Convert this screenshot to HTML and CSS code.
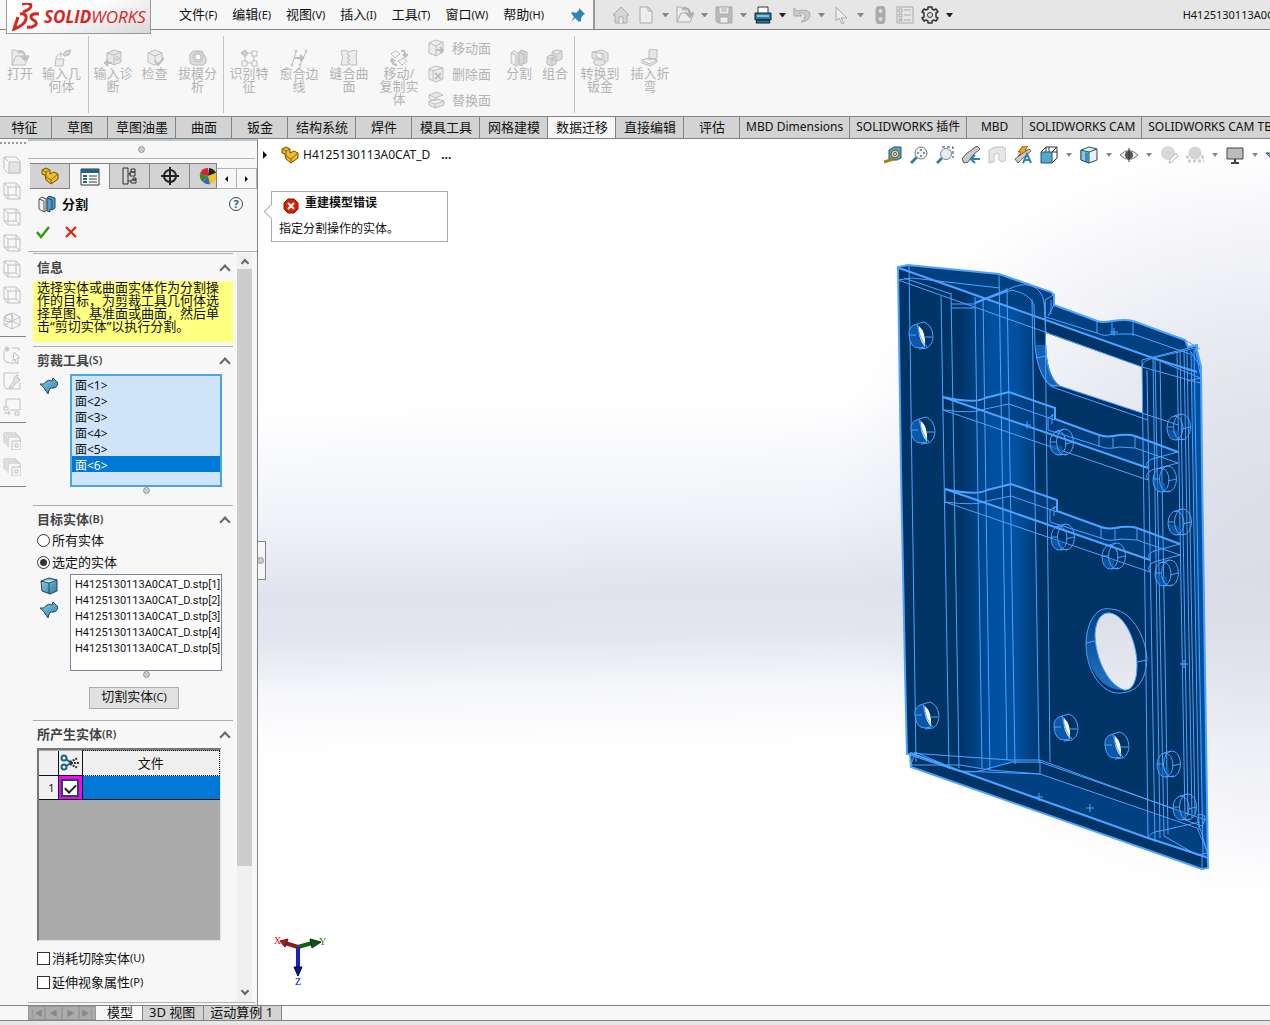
FILE: index.html
```
<!DOCTYPE html>
<html lang="zh-CN">
<head>
<meta charset="UTF-8">
<meta name="viewport" content="width=device-width, initial-scale=1.0">
<title>SOLIDWORKS</title>
<link rel="stylesheet" href="styles.css">
</head>
<body>

<!-- icon sprite -->
<svg class="sprite" aria-hidden="true">
    <linearGradient id="blueFace" x1="0" y1="0" x2="1" y2="1"><stop offset="0" stop-color="#8fd0e8"/><stop offset="1" stop-color="#2f7ca0"/></linearGradient>
    <symbol id="i-open" viewBox="0 0 18 18"><path fill="#ececec" d="M1 16V1h4l2 3h4M1 16l4-9h13l-4 9z"/><path stroke-width="2" d="M7 2q7-1 7 7M10 7l4 4 3-4"/></symbol>
    <symbol id="i-import" viewBox="0 0 18 18"><path fill="#ececec" d="M2 17l1-7h8l-1 7z"/><path d="M3 10q0-5 6-5l-2-2M9 5l-2 3"/><path fill="#d4d4d4" d="M10 5l3-3 5-1-2 5-5 1z"/></symbol>
    <symbol id="i-diag" viewBox="0 0 18 18"><path fill="#e6e6e6" d="M3 4l7-3 7 2v10l-7 3-7-4z"/><path d="M10 16V6M10 6l7-3M3 4l7 2M12 8h3v3h-3z"/><path stroke-width="2" d="M8 14H1m3-3l-3 3 3 3"/></symbol>
    <symbol id="i-check" viewBox="0 0 18 18"><path fill="#ececec" d="M8 16l-6-3V4l7-3 7 3v8l-7 4z"/><path d="M2 4l7 3 7-3M9 7v6"/><path stroke-width="2" d="M9 12l3 4 6-7"/></symbol>
    <symbol id="i-draft" viewBox="0 0 18 18"><path fill="#ddd" d="M1 14V5l3-3h9l4 7v5l-3 2H4z"/><circle cx="9" cy="8" r="5"/><circle cx="9" cy="8" r="3" fill="#fff"/></symbol>
    <symbol id="i-recog" viewBox="0 0 18 18"><path fill="#ccc" d="M1 4l4-3 3 3-3 4z"/><path d="M12 2h5v5h-5zM2 12h5v5H2zM12 12h5v5h-5zM8 4h4M5 8v4M14 7v5M7 14h5"/></symbol>
    <symbol id="i-heal" viewBox="0 0 18 18"><path d="M2 16L6 3M10 16l6-13"/><path stroke-width="2" d="M5 9h8m-3-3l3 3-3 3"/><circle cx="6" cy="2" r="1"/><circle cx="2" cy="16" r="1"/><circle cx="16" cy="2" r="1"/><circle cx="10" cy="16" r="1"/></symbol>
    <symbol id="i-knit" viewBox="0 0 18 18"><path fill="#ececec" d="M1 2q4-2 8 1 4-3 8-1-2 5 0 14h-7l-1-2-1 2H1Q4 8 1 2z"/><path d="M9 3L7 5l3 2-3 2 3 2-3 2 2 1"/></symbol>
    <symbol id="i-move" viewBox="0 0 18 18"><path d="M1 5l5-3 4 3-5 4zM8 12l5-3 4 3-5 4z"/><path stroke-width="2" d="M11 2q5-1 4 5m-2-2l2 3 3-3M7 16q-5 0-5-5m-1 2l1-3 3 2"/></symbol>
    <symbol id="i-face" viewBox="0 0 18 18"><path fill="#ececec" d="M2 4l6-3 8 2v10l-7 4-7-3z"/><path d="M2 4l7 3 7-4M9 7v10"/><path stroke-width="2" d="M9 11h6m-2-3l3 3-3 3"/></symbol>
    <symbol id="i-delface" viewBox="0 0 18 18"><path fill="#ececec" d="M2 4l6-3 8 2v11l-7 3-7-3z"/><path d="M2 4l4 2 10-3M6 6v9"/><path stroke-width="2" d="M8 8l6 6M14 8l-6 6"/></symbol>
    <symbol id="i-repface" viewBox="0 0 18 18"><path fill="#e6e6e6" d="M2 4l8-3 6 3-8 3zM2 10l8-2 7 2-9 3zM2 10v4l6 3 9-3v-4"/><path d="M2 4v3l6 3 1-3M8 13v4"/></symbol>
    <symbol id="i-split" viewBox="0 0 18 18"><path fill="#eee" d="M1 4l3-2 4 2v12l-2 1-5-3zM1 4l5 2v11"/><path fill="#d6d6d6" d="M9 3l2-2 6 2v10l-3 2-2-1v3l-3-1zM9 3l5 2v10"/></symbol>
    <symbol id="i-splitblue" viewBox="0 0 18 18"><path fill="#eee" stroke="#555" d="M1 4l3-2 4 2v12l-2 1-5-3zM1 4l5 2v11"/><path fill="#4b9bc2" stroke="#1d4b60" d="M9 3l2-2 6 2v10l-3 2-2-1v3l-3-1zM9 3l5 2v10"/></symbol>
    <symbol id="i-combine" viewBox="0 0 18 18"><path fill="#ddd" d="M6 3l4-2 6 1v8l-5 2-5-2zM1 8l3-2 6 1v8l-4 2-5-2zM1 8l5 2 4-3M6 10v7M6 3l5 2 5-3"/></symbol>
    <symbol id="i-sheet" viewBox="0 0 18 18"><path fill="#e6e6e6" d="M1 3l10-2 6 3v8l-4 1V5L1 3v6l5 2h7M3 11v4l6 2 5-2v-2"/><path d="M5 4v5l6 1V5"/></symbol>
    <symbol id="i-bend" viewBox="0 0 18 18"><path fill="#e6e6e6" d="M8 1l8-1v9l-8 2zM1 11l7-2 8 2-8 4zM1 11v3l8 3 7-4v-2"/></symbol>
    <symbol id="i-home" viewBox="0 0 18 18"><path fill="#d6d6d6" d="M1 9l8-8 8 8h-2v8H3V9z"/><path fill="#eee" d="M7 17v-6h4v6"/></symbol>
    <symbol id="i-new" viewBox="0 0 18 18"><path fill="#eee" d="M3 1h8l4 4v12H3zM11 1v4h4"/></symbol>
    <symbol id="i-save" viewBox="0 0 18 18"><path fill="#bbb" d="M1 1h16v16H3l-2-2z"/><path fill="#eee" d="M4 1h10v7H4zM5 11h8v6H5z"/><path d="M6 3h6M6 5h6"/></symbol>
    <symbol id="i-print" viewBox="0 0 18 18"><path fill="#fff" stroke="#333" d="M4 1h10v7H4z"/><path fill="#2a7fa5" stroke="#123" d="M1 7h16v7H1zM3 14h12l1 3H2z"/><path stroke="#fff" d="M3 10h12"/></symbol>
    <symbol id="i-undo" viewBox="0 0 18 18"><path fill="#ccc" d="M1 2v8h8L6 7q6-1 6 3 0 4-4 6 9-1 9-7 0-7-13-4z"/></symbol>
    <symbol id="i-cursor" viewBox="0 0 18 18"><path fill="#eee" d="M4 1l11 11H9l3 5-2 1-3-6-3 3z"/></symbol>
    <symbol id="i-light" viewBox="0 0 18 18"><rect x="5" y="0" width="9" height="18" rx="4" fill="#aaa"/><circle cx="9.500" cy="5" r="2" fill="#ddd" stroke="none"/><circle cx="9.500" cy="13" r="2" fill="#ddd" stroke="none"/></symbol>
    <symbol id="i-list" viewBox="0 0 18 18"><path d="M1 1h16v16H1zM3 3h3v3H3zM3 8h3v3H3zM3 13h3v2H3zM8 4h7M8 9h7M8 14h7"/></symbol>
    <symbol id="i-gear" viewBox="0 0 18 18"><path stroke="#333" stroke-linejoin="round" stroke-width="1.500" d="M7 1h4v2l2 1 2-1 2 3-2 1v4l2 1-2 3-2-1-2 1v2H7v-2l-2-1-2 1-2-3 2-1V7L1 6l2-3 2 1 2-1z"/><circle cx="9" cy="9" r="2.500" stroke="#333"/></symbol>
    <symbol id="i-pin" viewBox="0 0 18 18"><path fill="#2a86b5" stroke="none" d="M10 2l6 6-2 1-2 3v3l-2 1-4-4-4 4 3-5-3-4 2-1 3 1 3-3z"/></symbol>

    <symbol id="i-part" viewBox="0 0 18 18"><path fill="#f0bd2b" stroke="#6b4e00" d="M1 3l4-2 4 2v4l4-2 4 2v5l-7 5-5-4-1-5-3-1z"/><path stroke="#8a6700" d="M1 3l4 2 4-2M5 5v5l5 3 7-6M10 13v4"/></symbol>
    <symbol id="i-props" viewBox="0 0 20 18"><path fill="#fff" stroke="#333" d="M1 1h18v16H1z"/><path fill="#1f638a" stroke="none" d="M1 1h18v4H1zM3 7h4v2H3zM3 10h4v2H3zM3 13h4v2H3z"/><path stroke="#333" d="M9 8h8M9 11h8M9 14h8"/></symbol>
    <symbol id="i-config" viewBox="0 0 18 18"><path stroke="#333" d="M2 1h5v16H2zM7 7h3M7 14h3M10 2h4v3h-4zM9 5h5v4H9zM12 11h3v2h-3zM10 13h5v3h-5z"/></symbol>
    <symbol id="i-target" viewBox="0 0 18 18"><g stroke="#222" stroke-width="2"><circle cx="9" cy="9" r="6"/><path d="M9 0v18M0 9h18"/></g></symbol>
    <symbol id="i-ball" viewBox="0 0 18 18"><path fill="#d6202a" stroke="none" d="M9 9V1a8 8 0 0 0-8 6z"/><path fill="#222" stroke="none" d="M9 9L10 1a8 8 0 0 1 7 5z"/><path fill="#2c8f2c" stroke="none" d="M9 9L1 7a8 8 0 0 0 3 8z"/><path fill="#f2c61d" stroke="none" d="M9 9l8-3a8 8 0 0 1-6 11z"/><path fill="#2f64c8" stroke="none" d="M9 9l2 8a8 8 0 0 1-7-2z"/></symbol>
    <symbol id="i-surface" viewBox="0 0 18 18"><path fill="url(#blueFace)" stroke="#1d4b60" d="M0 7Q4 8 6 5 8 2 12 4l1-3 5 5q-1 5-5 5-4-1-5 6L6 14Q4 10 0 7z"/></symbol>
    <symbol id="i-body" viewBox="0 0 18 18"><path fill="url(#blueFace)" stroke="#1d4b60" d="M1 4l8-3 8 2v11l-7 3-8-3zM1 4l8 2 8-3M9 6v11"/></symbol>
    <symbol id="i-cut" viewBox="0 0 20 18"><g stroke="#1f638a" stroke-width="2"><circle cx="4" cy="4" r="2.500"/><circle cx="4" cy="13" r="2.500"/><path d="M6 5l5 4-5 3"/></g><path stroke="#333" stroke-width="2" stroke-dasharray="2 1" d="M10 8l8-4M10 10l8 4M11 9h8"/></symbol>

    <symbol id="i-measure" viewBox="0 0 18 18"><path fill="#5aa5cc" stroke="#1f5673" d="M5 4l5-3h7v11l-4 2H5z"/><circle cx="11" cy="8" r="4" fill="#f3d36b" stroke="#555"/><circle cx="11" cy="8" r="1.500" fill="#fff" stroke="#555"/><path stroke="#a68113" stroke-width="3" d="M0 16l9-3"/></symbol>
    <symbol id="i-zoomfit" viewBox="0 0 18 18"><path stroke="#3c7fa3" stroke-width="3" d="M1 17l6-6"/><circle cx="11" cy="7" r="6" fill="#eef3f6" stroke="#777"/><path stroke="#333" d="M11 3v2M11 9v2M7 7h2M13 7h2"/></symbol>
    <symbol id="i-zoomarea" viewBox="0 0 18 18"><path stroke="#333" stroke-dasharray="3 2" d="M6 1h11v11"/><path stroke="#3c7fa3" stroke-width="3" d="M1 17l5-5"/><circle cx="10" cy="8" r="5.500" fill="#e3edf3" stroke="#888"/></symbol>
    <symbol id="i-prev" viewBox="0 0 18 18"><path fill="#ccc" stroke="#555" d="M0 13l4-5L15 0l3 3-7 6-5 7-4 1z"/><path stroke="#2f83aa" stroke-width="2" d="M18 13H9m4-4l-4 4 4 4"/></symbol>
    <symbol id="i-section" viewBox="0 0 18 18"><path fill="#e6e6e6" stroke="#c0c0c0" d="M1 4l6-3h8l3 2v11l-4 2-3-2V8q-3-2-5 1v7l-5 1z"/></symbol>
    <symbol id="i-dyn" viewBox="0 0 18 18"><path fill="#f0a32b" stroke="#a05c00" d="M9 0h5l-3 4h3L4 11l3-5H4z"/><path fill="#ccc" stroke="#666" d="M1 13l4-3L15 3l2 2-9 8-4 4z"/><path stroke="#2f83aa" stroke-width="2" d="M9 17l4-9 4 9M11 14h5"/></symbol>
    <symbol id="i-orient" viewBox="0 0 18 18"><path stroke="#333" d="M1 6l5-5h11v11l-5 5M6 1v5M12 6l5-5M12 6h5M9 1v5"/><path fill="#59a7cb" stroke="#1f5673" d="M1 6h11v11H1z"/></symbol>
    <symbol id="i-style" viewBox="0 0 18 18"><path fill="#e6f0f4" stroke="#444" d="M1 4l8-3 8 2v11l-8 3-8-3z"/><path fill="#8cc8e0" stroke="#1f5673" d="M1 4l8 2v11l-8-3zM9 6l8-3"/><path fill="#3d8fb8" stroke="none" d="M5 6l4 1v9l-4-1z"/></symbol>
    <symbol id="i-eye" viewBox="0 0 18 18"><path fill="#eee" stroke="#777" d="M0 9q9-9 18 0-9 9-18 0z"/><circle cx="9" cy="9" r="4" fill="#555" stroke="none"/><path stroke="#333" d="M9 2v14"/></symbol>
    <symbol id="i-appear" viewBox="0 0 18 18"><circle cx="8" cy="7" r="7" fill="#d8d8d8" stroke="none"/><path fill="#f4f4f4" stroke="#bbb" d="M9 17l1-4 6-6 2 3-6 6z"/></symbol>
    <symbol id="i-scene" viewBox="0 0 18 18"><path stroke="#ccc" stroke-width="3" stroke-dasharray="3 2" d="M0 11h18M2 15h16"/><circle cx="9" cy="7" r="6.500" fill="#d4d4d4" stroke="none"/></symbol>
    <symbol id="i-screen" viewBox="0 0 18 18"><path fill="#bcbcbc" stroke="#444" d="M1 2h16v11H1z"/><path stroke="#444" stroke-width="2" d="M9 13v3M5 17h8"/></symbol>
    <symbol id="i-cube" viewBox="0 0 18 18"><path d="M1 1h12l4 4v12H5l-4-4zM1 1l4 4h12M5 5v12M1 13h12V1M13 13l4 4"/></symbol>
    <symbol id="i-cubefront" viewBox="0 0 18 18"><path d="M1 1h12l4 4v12H5l-4-4zM1 1l4 4"/><path fill="#e4e4e4" d="M6 6h11v11H6z"/></symbol>
    <symbol id="i-cubeiso" viewBox="0 0 18 18"><path d="M9 1l8 4v8l-8 4-8-4V5zM9 1v16M1 5l16 8M17 5L1 13"/><circle cx="6" cy="6" r="4"/></symbol>
    <symbol id="i-sketch" viewBox="0 0 18 18"><path d="M1 5v8q1 4 6 4h9M4 0v6M1 3h6M2 1l4 4M6 1L2 5M9 2h7v3M11 6l6 6h-3l1 4-2 1-1-4-2 2z"/></symbol>
    <symbol id="i-wrench" viewBox="0 0 18 18"><path d="M16 1H1v11q0 5 5 5h11v-6"/><path d="M6 15l5-6q-1-5 4-6l-1 3 3 1q0 3-4 4l-4 5q-3 1-3-1z" fill="#e4e4e4"/></symbol>
    <symbol id="i-box" viewBox="0 0 18 18"><path d="M3 9V1h14v11H7M1 9h4v3H1zM1 15h6m-2-2l2 2-2 2M12 14h4v3h-4z"/></symbol>
    <symbol id="i-stack" viewBox="0 0 18 18"><path d="M1 11V1h12v2M3 13V3h12v2M5 15V5h12v4M9 9h9v9H9zM12 12h3v3h-3z"/></symbol>

    <!-- drilled hole, plain and see-through -->
    <symbol id="hole" viewBox="0 0 30 30"><path fill="#1262b5" fill-opacity=".7" stroke="none" d="M3 16l12 2q1 5-1 9-9 1-11-11z"/><ellipse cx="11" cy="15" rx="8" ry="12"/><path d="M10 3l7-2M12 27l8-1M3 14h6M18 16l8-2"/><ellipse cx="18" cy="14" rx="8.500" ry="13"/></symbol>
    <symbol id="holeOpen" viewBox="0 0 30 30"><path fill="#0d57a8" d="M11 3q-9 2-8 11 1 13 10 13l6-1Q12 14 11 3z"/><path fill="#fff" stroke="none" d="M13 5q7 6 6 20-7-6-6-20z"/><path d="M11 3l7-2q8 3 9 14 0 8-6 12l-8 1M12 4q1 14 9 22M3 14h7M19 16h7"/></symbol>
</svg>

<header class="menubar">
    <nav class="menus">
        <div class="logo">
            <svg viewBox="0 0 28 28" aria-hidden="true"><path d="M10 1q9-2 9 2 0 3-8 6M8 11q7-1 6 5-1 6-12 10L6 14M27 11q-8-1-8 3 0 2 4 4 3 3-1 5-3 2-7 1"/></svg>
            <span><b>SOLID</b>WORKS</span>
        </div>
        <a href="#file">文件<small>(F)</small></a>
        <a href="#edit">编辑<small>(E)</small></a>
        <a href="#view">视图<small>(V)</small></a>
        <a href="#insert">插入<small>(I)</small></a>
        <a href="#tools">工具<small>(T)</small></a>
        <a href="#window">窗口<small>(W)</small></a>
        <a href="#help">帮助<small>(H)</small></a>
        <button class="icon pin" aria-label="pin"><svg><use href="#i-pin"/></svg></button>
    </nav>
    <div class="quick">
        <button class="icon"><svg><use href="#i-home"/></svg></button>
        <button class="icon"><svg><use href="#i-new"/></svg></button><i class="caret"></i>
        <button class="icon"><svg><use href="#i-open"/></svg></button><i class="caret"></i>
        <button class="icon"><svg><use href="#i-save"/></svg></button><i class="caret"></i>
        <button class="icon"><svg><use href="#i-print"/></svg></button><i class="caret dark"></i>
        <button class="icon"><svg><use href="#i-undo"/></svg></button><i class="caret"></i>
        <button class="icon"><svg><use href="#i-cursor"/></svg></button><i class="caret"></i>
        <button class="icon"><svg><use href="#i-light"/></svg></button>
        <button class="icon"><svg><use href="#i-list"/></svg></button>
        <button class="icon"><svg><use href="#i-gear"/></svg></button><i class="caret dark"></i>
        <span class="doc-title">H4125130113A0C</span>
    </div>
</header>

<section class="ribbon">
    <div class="group">
        <button class="cmd"><svg><use href="#i-open"/></svg>打开</button>
        <button class="cmd"><svg><use href="#i-import"/></svg>输入几<br>何体</button>
    </div>
    <div class="group">
        <button class="cmd"><svg><use href="#i-diag"/></svg>输入诊<br>断</button>
        <button class="cmd"><svg><use href="#i-check"/></svg>检查</button>
        <button class="cmd"><svg><use href="#i-draft"/></svg>拔模分<br>析</button>
    </div>
    <div class="group wide">
        <button class="cmd"><svg><use href="#i-recog"/></svg>识别特<br>征</button>
        <button class="cmd"><svg><use href="#i-heal"/></svg>愈合边<br>线</button>
        <button class="cmd"><svg><use href="#i-knit"/></svg>缝合曲<br>面</button>
        <button class="cmd"><svg><use href="#i-move"/></svg>移动/<br>复制实<br>体</button>
        <div class="stack">
            <button><svg><use href="#i-face"/></svg>移动面</button>
            <button><svg><use href="#i-delface"/></svg>删除面</button>
            <button><svg><use href="#i-repface"/></svg>替换面</button>
        </div>
        <button class="cmd narrow"><svg><use href="#i-split"/></svg>分割</button>
        <button class="cmd narrow"><svg><use href="#i-combine"/></svg>组合</button>
    </div>
    <div class="group wide">
        <button class="cmd"><svg><use href="#i-sheet"/></svg>转换到<br>钣金</button>
        <button class="cmd"><svg><use href="#i-bend"/></svg>插入折<br>弯</button>
    </div>
</section>

<nav class="tabs">
    <button class="first">特征</button>
    <button>草图</button>
    <button>草图油墨</button>
    <button>曲面</button>
    <button>钣金</button>
    <button>结构系统</button>
    <button>焊件</button>
    <button>模具工具</button>
    <button>网格建模</button>
    <button class="active">数据迁移</button>
    <button>直接编辑</button>
    <button>评估</button>
    <button class="latin">MBD Dimensions</button>
    <button class="latin">SOLIDWORKS 插件</button>
    <button class="latin">MBD</button>
    <button class="latin">SOLIDWORKS CAM</button>
    <button class="latin">SOLIDWORKS CAM TBM</button>
</nav>

<main>
    <aside class="sidebar">
        <div class="tools">
            <button class="icon"><svg><use href="#i-cubefront"/></svg></button>
            <button class="icon"><svg><use href="#i-cube"/></svg></button>
            <button class="icon"><svg><use href="#i-cube"/></svg></button>
            <button class="icon"><svg><use href="#i-cube"/></svg></button>
            <button class="icon"><svg><use href="#i-cube"/></svg></button>
            <button class="icon"><svg><use href="#i-cube"/></svg></button>
            <button class="icon"><svg><use href="#i-cubeiso"/></svg></button>
        </div>
        <div class="tools">
            <button class="icon"><svg><use href="#i-sketch"/></svg></button>
            <button class="icon"><svg><use href="#i-wrench"/></svg></button>
            <button class="icon"><svg><use href="#i-box"/></svg></button>
        </div>
        <div class="tools last">
            <button class="icon"><svg><use href="#i-stack"/></svg></button>
            <button class="icon"><svg><use href="#i-stack"/></svg></button>
        </div>
    </aside>

    <section class="panel">
        <div class="grip"><i class="dot"></i></div>
        <div class="panel-tabs">
            <button><svg><use href="#i-part"/></svg></button>
            <button class="active"><svg><use href="#i-props"/></svg></button>
            <button><svg><use href="#i-config"/></svg></button>
            <button><svg><use href="#i-target"/></svg></button>
            <button class="cut"><svg><use href="#i-ball"/></svg></button>
            <button class="step"><i class="left"></i></button>
            <button class="step"><i class="right"></i></button>
        </div>
        <div class="panel-title">
            <svg><use href="#i-splitblue"/></svg>
            <h1>分割</h1>
            <button class="help">?</button>
        </div>
        <div class="confirm">
            <button aria-label="OK"><svg viewBox="0 0 14 14"><path d="M1 7l4 5 8-10" stroke="#2f9a12" stroke-width="2.500"/></svg></button>
            <button aria-label="Cancel"><svg viewBox="0 0 14 14"><path d="M2 2l10 10M12 2L2 12" stroke="#e02000" stroke-width="2"/></svg></button>
        </div>
        <div class="panel-body">
            <div class="sections">
                <section>
                    <h2>信息<i class="up"></i></h2>
                    <p class="message">选择实体或曲面实体作为分割操<br>作的目标，为剪裁工具几何体选<br>择草图、基准面或曲面，然后单<br>击“剪切实体”以执行分割。</p>
                </section>
                <section>
                    <h2>剪裁工具<small>(S)</small><i class="up"></i></h2>
                    <div class="pick">
                        <div class="pick-icons"><svg><use href="#i-surface"/></svg></div>
                        <select class="trim" size="7" aria-label="剪裁工具">
                            <option>面&lt;1&gt;</option>
                            <option>面&lt;2&gt;</option>
                            <option>面&lt;3&gt;</option>
                            <option>面&lt;4&gt;</option>
                            <option>面&lt;5&gt;</option>
                            <option selected>面&lt;6&gt;</option>
                        </select>
                    </div>
                    <div class="sizer"><i class="dot"></i></div>
                </section>
                <section>
                    <h2>目标实体<small>(B)</small><i class="up"></i></h2>
                    <label class="choice first"><input type="radio" name="target">所有实体</label>
                    <label class="choice"><input type="radio" name="target" checked>选定的实体</label>
                    <div class="pick bodies">
                        <div class="pick-icons"><svg><use href="#i-body"/></svg><svg><use href="#i-surface"/></svg></div>
                        <select size="5" aria-label="目标实体">
                            <option>H4125130113A0CAT_D.stp[1]</option>
                            <option>H4125130113A0CAT_D.stp[2]</option>
                            <option>H4125130113A0CAT_D.stp[3]</option>
                            <option>H4125130113A0CAT_D.stp[4]</option>
                            <option>H4125130113A0CAT_D.stp[5]</option>
                        </select>
                    </div>
                    <div class="sizer tight"><i class="dot"></i></div>
                    <button class="push">切割实体<small>(C)</small></button>
                </section>
                <section>
                    <h2>所产生实体<small>(R)</small><i class="up"></i></h2>
                    <div class="grid">
                        <table>
                            <tr><th class="num"></th><th class="tick"><svg class="scissors"><use href="#i-cut"/></svg></th><th class="file">文件</th></tr>
                            <tr class="selected"><td class="num">1</td><td class="tick"><input type="checkbox" checked aria-label="1"></td><td></td></tr>
                        </table>
                    </div>
                    <label class="choice box"><input type="checkbox">消耗切除实体<small>(U)</small></label>
                    <label class="choice box"><input type="checkbox">延伸视象属性<small>(P)</small></label>
                </section>
            </div>
            <div class="scrollbar"><i class="up"></i><div class="thumb"></div><i class="down"></i></div>
        </div>
    </section>

    <section class="viewport">
        <div class="handle"><i class="dot"></i></div>
        <div class="view-head">
            <i class="expand"></i>
            <svg class="part"><use href="#i-part"/></svg>
            <span class="tree">H4125130113A0CAT_D</span><b>...</b>
            <div class="heads-up">
                <button class="icon"><svg><use href="#i-measure"/></svg></button>
                <button class="icon"><svg><use href="#i-zoomfit"/></svg></button>
                <button class="icon"><svg><use href="#i-zoomarea"/></svg></button>
                <button class="icon"><svg><use href="#i-prev"/></svg></button>
                <button class="icon"><svg><use href="#i-section"/></svg></button>
                <button class="icon"><svg><use href="#i-dyn"/></svg></button>
                <button class="icon"><svg><use href="#i-orient"/></svg></button><i class="caret"></i>
                <button class="icon"><svg><use href="#i-style"/></svg></button><i class="caret"></i>
                <button class="icon"><svg><use href="#i-eye"/></svg></button><i class="caret"></i>
                <button class="icon"><svg><use href="#i-appear"/></svg></button>
                <button class="icon"><svg><use href="#i-scene"/></svg></button><i class="caret"></i>
                <button class="icon"><svg><use href="#i-screen"/></svg></button><i class="caret"></i>
                <button class="icon"><svg><use href="#i-surface"/></svg></button>
            </div>
        </div>
        <div class="balloon">
            <h3><svg viewBox="0 0 16 16"><path fill="#d81e05" stroke="#8a1000" d="M5 1h6l4 4v6l-4 4H5l-4-4V5z"/><path stroke="#fff" stroke-width="2" d="M5 5l6 6M11 5l-6 6"/></svg>重建模型错误</h3>
            <p>指定分割操作的实体。</p>
        </div>

        <svg class="model" viewBox="890 260 330 620">
            <defs>
                <linearGradient id="bore"><stop offset=".1" stop-color="#003366"/><stop offset=".45" stop-color="#0050a0"/><stop offset=".72" stop-color="#0050a0"/><stop offset="1" stop-color="#003366"/></linearGradient>
                <linearGradient id="rim" x1="0" y1="0" x2="0" y2="1"><stop offset="0" stop-color="#004080"/><stop offset="1" stop-color="#2273c8"/></linearGradient>
            </defs>
            <!-- body with the rectangular window and the round opening left open -->
            <path fill="#003366" fill-rule="evenodd" d="M898 267L908 265L999 274L1051 292L1054 295V305L1097 321Q1103 323 1112 321Q1125 319 1133 321L1185 340L1188 347L1197 345V350L1201 367L1202 470L1205 670L1208 868L1202 869L911 767L910 754L907 754L905 670L901 470ZM1046 333L1142 367V413L1060 386Q1047 376 1046 345ZM1110 613C1125 615 1137 642 1137 665C1137 682 1132 691 1124 690C1106 684 1095 655 1095 634C1096 620 1101 612 1110 613Z"/>
            <path fill="#0050a0" d="M1191 352L1197 347L1201 367L1208 866L1202 850Z"/>
            <path fill="url(#bore)" d="M951 295L985 297L1007 290L1033 299L1043 760L1009 764L990 769L959 768Z"/>
            <path fill="#004080" d="M900 267L908 265L999 274L1051 292L1054 305L1097 321Q1103 323 1112 321Q1125 319 1133 321L1185 340L1190 350L1153 357L1033 315Z"/>
            <path fill="#1262b5" d="M1035 345H1046Q1046 380 1060 386L1052 388Q1038 380 1035 345Z"/>
            <g id="shelf">
                <path fill="#004080" fill-opacity=".8" d="M943 397Q975 404 985 398L1009 392L1055 408L1054 418L1099 435Q1107 438 1119 435Q1130 434 1135 436L1178 452L1148 468Z"/>
                <g class="edge thick"><path d="M943 397L1148 468M943 397Q975 404 985 398L1009 392L1055 408V419L1099 435Q1107 438 1119 435Q1130 434 1135 436L1178 452"/></g>
                <g class="edge"><path d="M943 410L1148 480M943 397V410Q975 414 985 409L1009 404L1055 420M1055 414L1048 418V430M1048 430L1099 446Q1107 450 1119 447L1135 448L1178 463M1178 452L1152 459Q1144 462 1148 468M1178 463L1152 470Q1144 474 1148 480M1052 414V424M1099 436V447M1113 438V448M1135 436V448"/></g>
            </g>
            <use href="#shelf" x="2" y="92"/>
            <path fill="#004080" d="M958 771L990 770L1040 774L1195 829L1206 857L1148 838Z"/>
            <path fill="url(#rim)" d="M1110 610C1095 606 1086 625 1086 645C1087 672 1105 691 1124 690C1106 684 1095 655 1095 634C1096 620 1101 612 1110 613Z"/>

            <g class="edge thick">
                <path d="M898 267L908 265L999 274L1051 292L1054 295V305L1097 321Q1103 323 1112 321Q1125 319 1133 321L1185 340L1188 347L1197 345V350L1201 367L1202 470L1205 670L1208 868L1202 869L911 767L910 754L907 754L905 670L901 470Z"/>
                <path d="M899 268L1153 358L1197 372M975 303L1007 290M910 753L1148 838L1206 857"/>
            </g>
            <g class="edge">
                <path d="M898 280L1045 332L1142 367L1200 383M898 280L912 278L1000 288M904 278L951 294M951 304H975M951 308H975M975 303L1012 290Q1030 294 1034 305L1035 345Q1038 380 1055 388M1007 290Q1022 282 1032 286Q1042 290 1044 302L1046 333M1046 345Q1046 378 1060 386L1142 413L1178 425M1055 388L1148 420"/>
                <path d="M1055 294L1045 300V315M1054 305L1048 316M1051 300V314M1097 322V333M1112 322V335M1133 322V336M1046 317L1097 333Q1104 337 1112 334L1133 334L1190 354M1153 358L1196 348M1142 367Q1142 360 1155 358M1195 348L1201 378L1188 381M1190 351L1201 367M1153 358L1200 378M1142 360L1197 346M1185 340L1200 349"/>
                <path d="M909 265L916 762M941 296L949 769M951 293L959 768M975 297L982 768M983 297L990 770M999 275L1007 760M1007 288L1015 764M1032 299L1039 763M1045 302L1050 762"/>
                <path d="M1142 360L1148 838M1147 370L1155 842M1153 358L1160 838M1155 358L1164 836M1160 360L1168 834M1177 352L1185 820M1180 352L1188 815M1184 350L1192 818M1187 350L1195 815M1191 352L1199 830M1194 350L1203 855"/>
                <path d="M910 753L1010 760L1040 760L1190 815M907 754L958 771Q975 774 990 768L1012 762L1040 762L1206 820M911 765L915 752L960 771L1040 774L1197 828M1040 760V774M911 765L960 765L990 770L1040 774M1148 838Q1150 832 1160 831L1200 822M1160 842L1208 858M1164 836L1197 855M1197 818L1208 855M1202 855V869M1197 815Q1210 812 1202 826L1185 820M1197 855L1208 853L1197 828"/>
                <path d="M1110 609C1095 606 1086 625 1086 645C1087 676 1105 695 1121 693C1136 692 1146 682 1147 658C1145 634 1130 609 1110 609Z M1110 613C1125 615 1137 642 1137 665C1137 682 1132 691 1124 690C1106 684 1095 655 1095 634C1096 620 1101 612 1110 613ZM1086 643L1095 641M1137 662L1147 660"/>
                <path d="M1110 332h8M1114 328v8M1023 425h8M1027 421v8M1035 797h8M1039 793v8M1086 808h8M1090 804v8M1180 664h8M1184 660v8M1036 358L1046 356M1050 385L1060 386"/>
                <use href="#holeOpen" x="906" y="321" width="30" height="30"/>
                <use href="#holeOpen" x="908" y="416" width="30" height="30"/>
                <use href="#holeOpen" x="912" y="701" width="30" height="30"/>
                <use href="#holeOpen" x="1051" y="713" width="30" height="30"/>
                <use href="#holeOpen" x="1102" y="731" width="30" height="30"/>
                <use href="#hole" x="1047" y="428" width="30" height="30"/>
                <use href="#hole" x="1164" y="413" width="30" height="30"/>
                <use href="#hole" x="1150" y="465" width="30" height="30"/>
                <use href="#hole" x="1048" y="523" width="30" height="30"/>
                <use href="#hole" x="1099" y="542" width="30" height="30"/>
                <use href="#hole" x="1165" y="508" width="30" height="30"/>
                <use href="#hole" x="1152" y="559" width="30" height="30"/>
                <use href="#hole" x="1154" y="750" width="30" height="30"/>
                <use href="#hole" x="1170" y="793" width="30" height="30"/>
            </g>
        </svg>

        <svg class="triad" viewBox="0 0 56 54">
            <path stroke="#8e1b1b" stroke-width="4" d="M25 14L12 10"/><path fill="#a51c1c" stroke="#611" d="M15 6l-8 2 5 6z"/>
            <path stroke="#155f15" stroke-width="4" d="M25 14l14-4"/><path fill="#145214" stroke="#031" d="M37 6l11 3-9 6z"/>
            <path stroke="#1c1cc8" stroke-width="4" d="M25 14v22"/><path fill="#14148c" stroke="#003" d="M21 34h8l-4 9z"/>
            <text x="1" y="11" fill="#f00">X</text><text x="46" y="12" fill="#080">Y</text><text x="22" y="52" fill="#00f">Z</text>
        </svg>
    </section>
</main>

<footer>
    <div class="doc-tabs">
        <button class="nav">|◀</button><button class="nav">◀</button><button class="nav">▶</button><button class="nav">▶|</button>
        <button class="active">模型</button>
        <button>3D 视图</button>
        <button>运动算例 1</button>
    </div>
</footer>

</body>
</html>
```
FILE: styles.css
```
* {
    box-sizing: border-box;
}
body {
    margin: 0;
    height: 100vh;
    display: flex;
    flex-direction: column;
    overflow: hidden;
    background: #f7f7f7;
    color: #111;
    font: 13px/16px "Noto Sans", "Noto Sans CJK SC", sans-serif;
}
h1, h2, h3, p {
    margin: 0;
    font-size: 13px;
}
button {
    border: 0;
    padding: 0;
    background: none;
    color: inherit;
    font: inherit;
}
svg {
    display: block;
    flex: none;
    width: 18px;
    height: 18px;
    fill: none;
    stroke: currentColor;
}
small {
    font-size: 11px;
}
.sprite {
    position: absolute;
    width: 0;
    height: 0;
}
.icon {
    width: 18px;
    height: 18px;
    flex: none;
}
.caret {
    width: 7px;
    flex: none;
    border: 3px solid transparent;
    border-top: 4px solid #888;
    border-bottom: 0;
}
.caret.dark {
    border-top-color: #222;
}
.dot {
    width: 7px;
    height: 7px;
    border: 1px solid #999;
    border-radius: 50%;
    background: #ccc;
}

/* menu bar */
.menubar {
    display: flex;
    height: 30px;
    flex: none;
    border-bottom: 1px solid #848484;
    background: #e6e6e6;
}
.menus {
    position: relative;
    display: flex;
    align-items: center;
    gap: 15px;
    width: 595px;
    flex: none;
    padding-left: 179px;
    border-right: 2px solid #999;
    background: #f7f7f7;
}
.menus a {
    color: #111;
    text-decoration: none;
    white-space: nowrap;
}
.pin {
    margin: 0 6px 0 auto;
}
.logo {
    position: absolute;
    z-index: 2;
    top: 0;
    left: 6px;
    width: 145px;
    height: 34px;
    display: flex;
    align-items: center;
    gap: 4px;
    padding-left: 5px;
    border: 1px solid #999;
    border-top: 0;
    background: linear-gradient(160deg, #fff 40%, #d8d8d8);
    color: #d9261c;
    font-family: "Open Sans", sans-serif;
    font-size: 17px;
    font-style: italic;
}
.logo svg {
    width: 28px;
    height: 28px;
    stroke-width: 3;
}
.quick {
    display: flex;
    align-items: center;
    gap: 7px;
    flex: 1;
    min-width: 0;
    padding-left: 17px;
    color: #aaa;
}
.doc-title {
    margin-left: auto;
    margin-right: -4px;
    color: #111;
    font-size: 11px;
    white-space: nowrap;
}

/* command ribbon */
.ribbon {
    display: flex;
    flex: none;
    height: 86px;
    padding: 6px 0 3px;
    color: #b4b4b4;
    line-height: 13px;
}
.ribbon svg {
    color: #bdbdbd;
}
.group {
    display: flex;
    padding: 0 4px 0 4px;
    border-right: 1px solid #c4c4c4;
}
.group:first-child {
    padding: 0 5px 0 0;
}
.group.wide {
    padding: 0 1px 0 0;
}
.group:last-child {
    border: 0;
}
.cmd {
    display: flex;
    flex-direction: column;
    align-items: center;
    width: 40px;
    padding-top: 13px;
    white-space: nowrap;
}
.cmd + .cmd {
    width: 43px;
}
.wide .cmd {
    width: 50px;
}
.wide .narrow {
    width: 36px;
}
.stack {
    display: flex;
    flex-direction: column;
    gap: 8px;
    padding: 3px 10px 0 3px;
}
.stack button {
    display: flex;
    align-items: center;
    gap: 7px;
}

/* command tabs */
.tabs {
    display: flex;
    flex: none;
    height: 23px;
    overflow: hidden;
    border: 1px solid #848484;
    border-width: 1px 0;
    background: #d3d3d3;
}
.tabs button {
    flex: none;
    min-width: 56px;
    padding: 0 7px 2px 8px;
    border-right: 1px solid #848484;
}
.tabs button.latin {
    padding: 0 6px 1px;
    font-size: 12px;
}
.tabs button.first {
    min-width: 52px;
    padding: 0 10px 2px 8px;
}
.tabs button.active {
    background: #f7f7f7;
}

main {
    display: flex;
    flex: 1;
    min-height: 0;
}

/* view tools on the left */
.sidebar {
    width: 26px;
    flex: none;
    margin: 3px 2px 0 0;
    border-top: 2px dotted #999;
    padding-top: 12px;
    color: #c0c0c0;
}
.tools {
    display: flex;
    flex-direction: column;
    gap: 8px;
    padding: 0 0 6px 3px;
    margin-bottom: 9px;
    border-bottom: 1px solid #848484;
}
.tools.last {
    padding-bottom: 10px;
}

/* property panel */
.panel {
    display: flex;
    flex-direction: column;
    width: 230px;
    flex: none;
    border-top: 2px solid #b8c4c8;
    border-right: 1px solid #848484;
}
.grip {
    display: flex;
    justify-content: center;
    align-items: center;
    height: 18px;
    margin-right: 2px;
    border-bottom: 1px solid #b4b4b4;
}
.panel-tabs {
    display: flex;
    height: 26px;
    margin: 4px 0 0 2px;
}
.panel-tabs button {
    display: flex;
    align-items: center;
    justify-content: center;
    width: 40px;
    border: 1px solid #848484;
    border-left: 0;
    background: #d3d3d3;
}
.panel-tabs button.active {
    border-bottom: 0;
    background: #f7f7f7;
}
.panel-tabs button.active svg {
    width: 20px;
}
.panel-tabs button.cut {
    width: 27px;
    overflow: hidden;
    padding-left: 10px;
}
.panel-tabs button.step {
    width: 20px;
    margin-top: 5px;
    border-color: #b4b4b4;
    background: #f7f7f7;
}
.step i {
    border: 3px solid transparent;
}
.step .left {
    border-right-color: #111;
    margin-right: 3px;
}
.step .right {
    border-left-color: #111;
    margin-left: 3px;
}
.panel-title {
    display: flex;
    align-items: center;
    gap: 6px;
    height: 30px;
    padding: 0 14px 0 10px;
}
.help {
    width: 14px;
    height: 14px;
    margin-left: auto;
    border: 1px solid #345;
    border-radius: 50%;
    color: #1f638a;
    font-size: 11px;
    font-weight: bold;
    line-height: 12px;
}
.confirm {
    display: flex;
    align-items: center;
    gap: 14px;
    height: 33px;
    padding: 0 0 6px 8px;
    border-bottom: 1px solid #adadad;
}
.confirm svg {
    width: 14px;
    height: 14px;
}
.panel-body {
    display: flex;
    flex: 1;
    min-height: 0;
    margin: 1px 2px 2px 0;
    padding-left: 5px;
    border-bottom: 1px solid #b4b4b4;
}
.sections {
    width: 200px;
    margin-right: 4px;
}
.sections > section {
    padding-left: 4px;
    border-top: 1px solid #adadad;
}
h2 {
    display: flex;
    align-items: center;
    height: 27px;
    padding: 0 4px 2px 0;
    color: #444;
}
h2 small {
    font-weight: 600;
}
.up, .down {
    width: 8px;
    height: 8px;
    border: solid #666;
    border-width: 2px 0 0 2px;
    transform: rotate(45deg);
}
.down {
    transform: rotate(225deg);
}
h2 .up {
    margin: 6px 0 0 auto;
}
.message {
    height: 61px;
    margin: 0 0 4px -4px;
    padding-left: 4px;
    background: #ffff80;
    line-height: 13px;
    white-space: nowrap;
}
.pick {
    display: flex;
}
.pick-icons {
    display: flex;
    flex-direction: column;
    gap: 6px;
    width: 33px;
    padding: 3px 0 0 3px;
}
select {
    width: 152px;
    height: 97px;
    padding: 3px 0 0;
    border: 1px solid #7f849c;
    border-radius: 0;
    background: #fff;
    color: #111;
    font: 11px/16px Roboto, sans-serif;
    overflow: hidden;
    outline: 0;
}
select option {
    height: 16px;
    min-height: 0;
    padding: 0 4px;
    line-height: 16px;
}
select.trim {
    height: 113px;
    padding: 0;
    border: 2px solid #4ba6de;
    background: #cfe4f8;
    font: 12px/16px "Noto Sans", "Noto Sans CJK SC", sans-serif;
}
.trim option {
    padding: 0 3px;
    line-height: 14px;
}
.trim option:checked {
    background: #0078d7 linear-gradient(#0078d7, #0078d7);
    color: #fff;
    -webkit-text-fill-color: #fff;
}
.sizer {
    display: flex;
    justify-content: center;
    height: 18px;
    padding-left: 22px;
}
.sizer.tight {
    height: 16px;
}
.choice {
    display: flex;
    align-items: center;
    height: 22px;
}
.choice.first {
    margin-top: -4px;
}
.choice input {
    appearance: none;
    width: 13px;
    height: 13px;
    margin: 0 2px 0 0;
    border: 1px solid #333;
    background: #fff;
}
.choice input[type=radio] {
    border-radius: 50%;
}
.choice input[type=radio]:checked {
    background: radial-gradient(circle, #333 3px, #fff 4px);
}
.bodies {
    margin-top: 1px;
}
.push {
    width: 90px;
    height: 22px;
    margin: 0 0 11px 52px;
    padding-bottom: 3px;
    border: 1px solid #adadad;
    background: #e1e1e1;
}
.grid {
    width: 184px;
    height: 193px;
    margin-bottom: 5px;
    border: 1px solid #e4e4e4;
    border-top: 2px solid #777;
    border-left: 2px solid #777;
    background: #ababab;
}
table {
    width: 100%;
    border-collapse: collapse;
}
th, td {
    height: 25px;
    padding: 0;
    border-right: 1px solid #111;
    border-bottom: 1px solid #111;
    background: #f0f0f0;
    font-weight: normal;
    text-align: center;
}
.num {
    width: 19px;
    padding-right: 3px;
    font-size: 11px;
    text-align: right;
}
.tick {
    width: 24px;
}
.file {
    border: 1px dotted #111;
}
.scissors {
    width: 20px;
    margin: 0 auto;
}
.selected td {
    height: 24px;
}
.selected td:last-child {
    border-right: 0;
    background: #0078d7;
}
.selected .tick {
    background: #f0f;
}
.tick input {
    appearance: none;
    display: block;
    width: 18px;
    height: 18px;
    margin: 0 auto;
    border: 2px solid #1f4a63;
    background: #fff;
}
.tick input:checked::before {
    content: "";
    display: block;
    width: 9px;
    height: 5px;
    margin: 3px 0 0 2px;
    border: solid #222;
    border-width: 0 0 2px 2px;
    transform: rotate(-45deg);
}
.choice.box {
    height: 24px;
}
.scrollbar {
    display: flex;
    flex-direction: column;
    align-items: center;
    width: 15px;
    padding: 7px 0 8px;
    background: #f0f0f0;
}
.scrollbar .up, .scrollbar .down {
    width: 6px;
    height: 6px;
    flex: none;
}
.thumb {
    width: 15px;
    height: 597px;
    flex-shrink: 1;
    margin: 3px 0 auto;
    background: #cdcdcd;
}

/* graphics area */
.viewport {
    position: relative;
    flex: 1;
    min-width: 0;
    overflow: hidden;
    background:
        radial-gradient(ellipse 46% 44% at 102% 44%, rgba(216, 218, 230, .9) 0%, rgba(218, 220, 232, .7) 40%, transparent 100%),
        linear-gradient(179deg, transparent 30%, rgba(238, 240, 247, .8) 43%, #e0e3ed 52%, #e4e6ef 57%, rgba(244, 245, 249, .8) 63%, transparent 70%),
        #fff;
}
.handle {
    position: absolute;
    top: 402px;
    left: -1px;
    width: 9px;
    height: 39px;
    display: flex;
    align-items: center;
    border: 1px solid #848484;
    border-left: 0;
    background: #f7f7f7;
}
.view-head {
    display: flex;
    align-items: center;
    height: 31px;
    padding-left: 5px;
    font-size: 12px;
}
.expand {
    border: 4px solid transparent;
    border-left: 4px solid #111;
    border-right: 0;
    margin-right: 14px;
}
.tree {
    margin: 0 11px 0 4px;
}
.heads-up {
    display: flex;
    align-items: center;
    gap: 8px;
    margin: 0 -14px 0 auto;
}
.heads-up .caret {
    width: 6px;
}
.balloon {
    position: absolute;
    top: 52px;
    left: 13px;
    width: 177px;
    height: 51px;
    padding: 3px 7px;
    border: 1px solid #a8a8b0;
    background: #fff;
    font-size: 12px;
}
.balloon::before {
    content: "";
    position: absolute;
    top: 14px;
    left: -6px;
    width: 10px;
    height: 10px;
    border: solid #a8a8b0;
    border-width: 0 0 1px 1px;
    background: #fff;
    transform: rotate(45deg);
}
.balloon h3 {
    display: flex;
    gap: 6px;
    padding-left: 4px;
    font-size: 12px;
}
.balloon svg {
    width: 16px;
    height: 16px;
    margin-top: 3px;
}
.balloon p {
    margin-top: 7px;
    font-size: 12px;
}
.model {
    position: absolute;
    top: 121px;
    left: 632px;
    width: 330px;
    height: 620px;
    stroke: none;
}
.edge {
    stroke: #4da3ff;
    stroke-width: 1;
}
.edge.thick {
    stroke-width: 2;
}
.triad {
    position: absolute;
    left: 15px;
    bottom: 18px;
    width: 56px;
    height: 54px;
}
.triad text {
    stroke: none;
    font: 10px "Liberation Serif", serif;
}

/* document tabs */
footer {
    flex: none;
    height: 20px;
    padding-bottom: 4px;
    background: #e6e6e6;
}
.doc-tabs {
    display: flex;
    height: 16px;
    padding-left: 28px;
    border: 1px solid #848484;
    border-width: 1px 0;
    background: #f7f7f7;
    line-height: 12px;
}
.doc-tabs button {
    padding: 0 8px 2px 6px;
    border-right: 1px solid #848484;
    background: #d3d3d3;
}
.doc-tabs button.nav {
    width: 17px;
    padding: 0;
    border: 1px solid #999;
    background: #ababab;
    color: #888;
    font-size: 8px;
}
.doc-tabs button.active {
    padding: 0 9px 2px 11px;
    background: #f7f7f7;
}
```
